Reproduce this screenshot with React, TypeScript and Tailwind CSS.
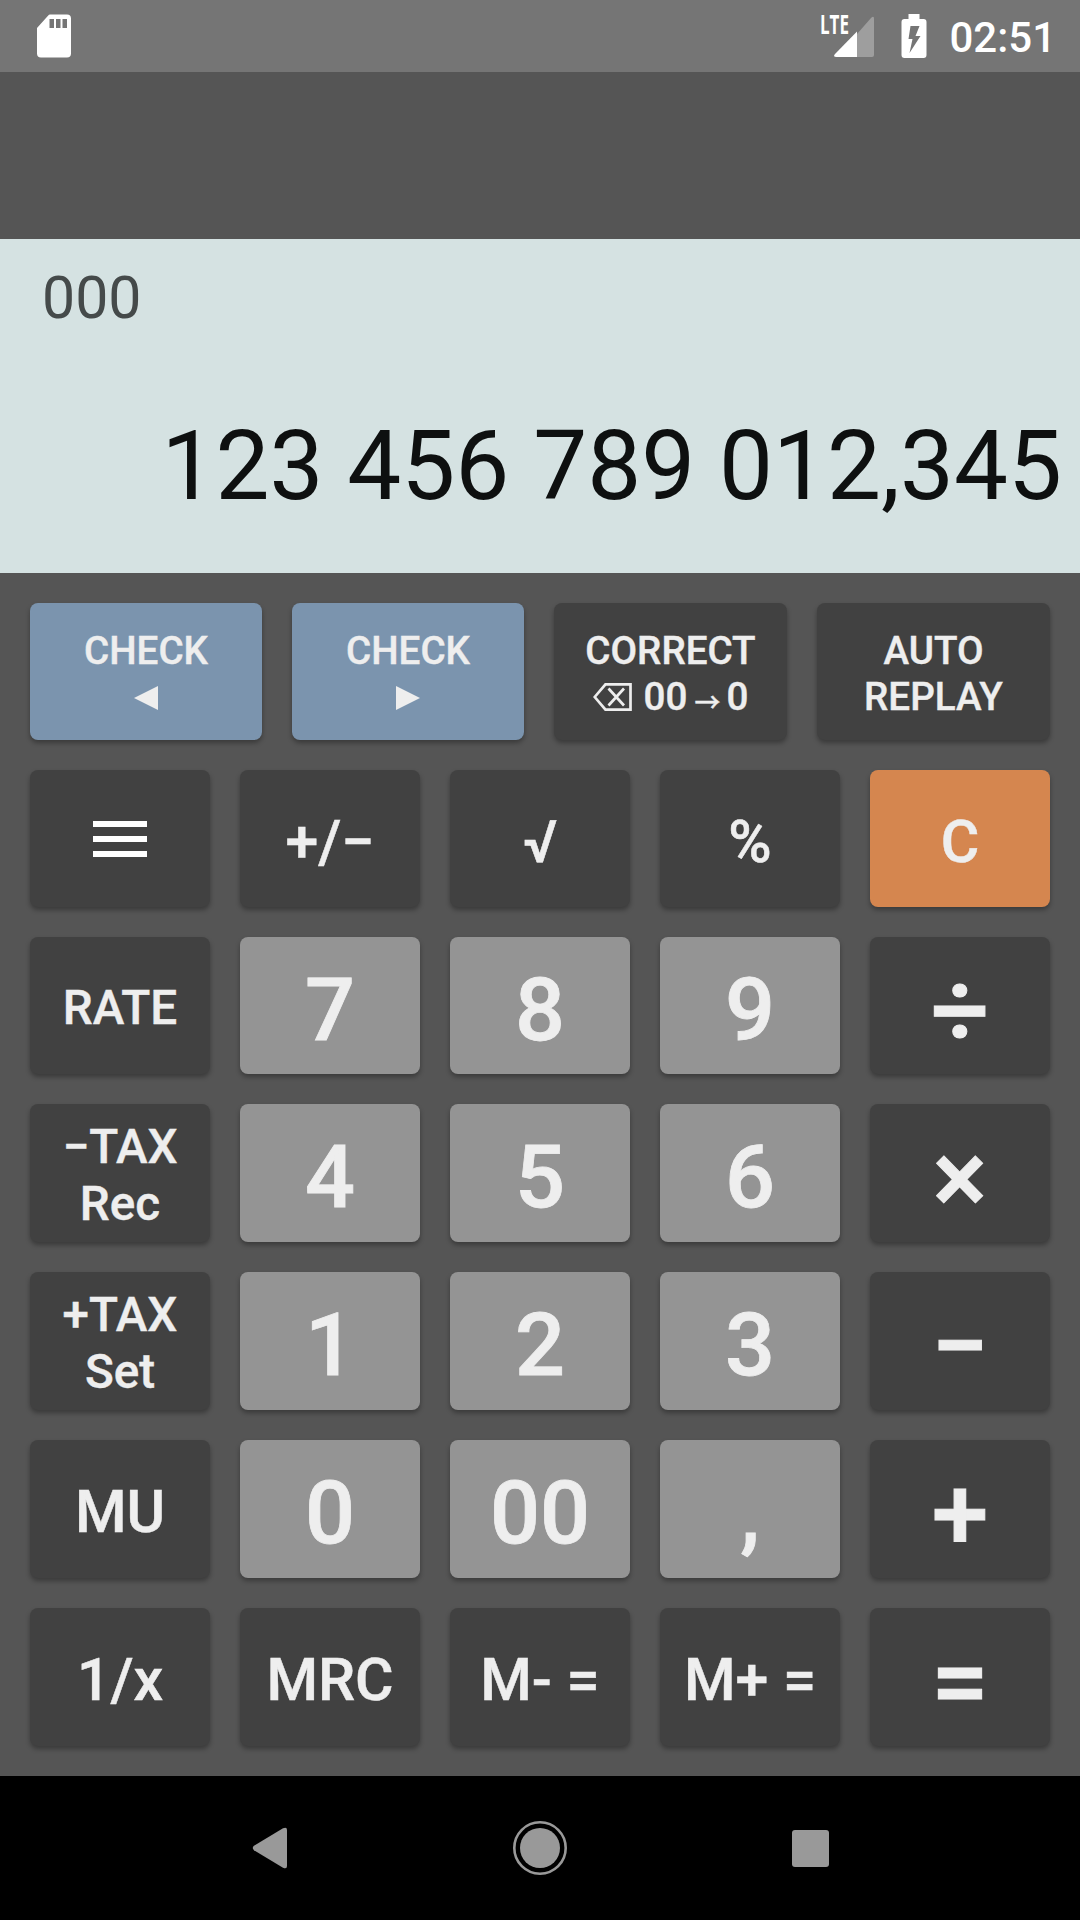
import type { ReactNode } from 'react';

type Tone = 'dark' | 'light' | 'blue' | 'orange';

const tones: Record<Tone, string> = {
  dark: 'bg-[#414141]',
  light: 'bg-[#949494]',
  blue: 'bg-[#7b94ae]',
  orange: 'bg-[#d5864f]',
};

const sizes = {
  icon: 'pt-px',
  xs: 'pt-[5px] text-[38.6px] leading-[46px] [-webkit-text-stroke:0.4px]',
  sm: 'pt-[5px] text-[47.6px] leading-[57px] [-webkit-text-stroke:0.4px]',
  md: 'pt-[6px] text-[59px] leading-[70px] [-webkit-text-stroke:0.5px]',
  lg: 'pt-[8px] text-[88px] leading-[106px] [-webkit-text-stroke:0.8px]',
  op: 'pt-[9px] text-[102px] leading-[118px] font-bold [-webkit-text-stroke:1px]',
};

function Key({
  children,
  tone = 'dark',
  size = 'md',
}: {
  children: ReactNode;
  tone?: Tone;
  size?: keyof typeof sizes;
}) {
  return (
    <button
      className={`flex min-w-0 flex-col items-center justify-center whitespace-pre rounded-[8px] font-medium text-[#eeeeee] shadow-[0_3px_5px_rgba(0,0,0,0.32)] ${tones[tone]} ${sizes[size]}`}
    >
      {children}
    </button>
  );
}

function StatusBar() {
  return (
    <header className="flex h-[72px] shrink-0 items-center bg-[#757575] text-white">
      {/* SD card */}
      <svg className="ml-[36px]" width="36" height="44" viewBox="0 0 36 44">
        <path
          fill="currentColor"
          fillRule="evenodd"
          d="M14 .5h17a4 4 0 0 1 4 4v35a4 4 0 0 1-4 4H5a4 4 0 0 1-4-4V14L12 1.700Q13 .5 14 .5ZM13.500 5v9h4.500V5Zm6.500 0v9h4.500V5Zm6.500 0v9h4.500V5Z"
        />
      </svg>

      <div className="ml-auto flex items-center pr-[24px]">
        {/* Signal */}
        <svg className="overflow-visible" width="60" height="60" viewBox="0 -8 60 60">
          <path d="M57 4.500V41a2 2 0 0 1-2 2H40V20L54 4Q57 1.500 57 4.500Z" fill="#9e9e9e" />
          <path d="M40 17.500V43H19.500Q15.500 43 18 40Z" fill="currentColor" />
          <text
            x="3"
            y="20"
            fill="currentColor"
            fontFamily="'Open Sans', sans-serif"
            fontSize="26.500"
            fontWeight="700"
            textLength="29"
            lengthAdjust="spacingAndGlyphs"
          >
            LTE
          </text>
        </svg>
        {/* Battery, charging */}
        <svg className="ml-[24px]" width="26" height="44" viewBox="0 0 26 44">
          <path
            fill="currentColor"
            fillRule="evenodd"
            d="M7.500 0h11v5h4a3 3 0 0 1 3 3v33a3 3 0 0 1-3 3h-19a3 3 0 0 1-3-3V8a3 3 0 0 1 3-3h4ZM9.500 12 7.500 25h4L8.500 39 19.500 22h-5l4-10Z"
          />
        </svg>
        <span className="ml-[22px] pt-[4px] text-[42px] font-medium leading-none">02:51</span>
      </div>
    </header>
  );
}

function NavBar() {
  return (
    <nav className="flex h-[144px] shrink-0 items-center justify-center bg-black text-[#999999]">
      <div className="flex w-[270px] justify-center">
        <svg width="36" height="44" viewBox="0 0 36 44">
          <path d="M2 19.800 31 2.300Q35 .5 35 4v36q0 3.500-4 1.700L2 24.200Q-.5 22 2 19.800Z" fill="currentColor" />
        </svg>
      </div>
      <div className="flex w-[270px] justify-center">
        <svg width="56" height="56" viewBox="0 0 56 56">
          <circle cx="28" cy="28" r="25.700" fill="none" stroke="currentColor" strokeWidth="2.600" />
          <circle cx="28" cy="28" r="20" fill="currentColor" />
        </svg>
      </div>
      <div className="flex w-[270px] justify-center">
        <div className="h-[37px] w-[37px] rounded-[3px] bg-[#999999]" />
      </div>
    </nav>
  );
}

export default function App() {
  return (
    <div className="flex h-[1920px] w-[1080px] flex-col bg-[#555555] font-['Roboto',sans-serif]">
      <StatusBar />

      <div className="h-[167px] shrink-0" />

      {/* Display */}
      <section className="flex h-[334px] shrink-0 flex-col bg-[#d5e2e2]">
        <p className="pl-[42px] pt-[24px] text-[59px] leading-[70px] text-[#454a4a]">000</p>
        <p className="mt-[77px] pr-[18px] text-right text-[96.1px] leading-[113px] text-[#0e1010]">
          123 456 789 012,345
        </p>
      </section>

      {/* Keypad */}
      <main className="flex flex-1 flex-col gap-[30px] p-[30px]">
        <div className="grid h-[137px] grid-cols-[232px_232px_233px_233px] gap-[30px]">
          <Key tone="blue" size="xs">
            <span>CHECK</span>
            <svg className="mb-[10px] mt-[12px]" width="24" height="24" viewBox="0 0 24 24">
              <path d="M0 12 24 0v24Z" fill="currentColor" />
            </svg>
          </Key>
          <Key tone="blue" size="xs">
            <span>CHECK</span>
            <svg className="mb-[10px] mt-[12px]" width="24" height="24" viewBox="0 0 24 24">
              <path d="M24 12 0 0v24Z" fill="currentColor" />
            </svg>
          </Key>
          <Key size="xs">
            <span>CORRECT</span>
            <span className="flex items-center">
              <svg className="mr-[12px]" width="39" height="28" viewBox="0 0 39 28" fill="none" stroke="currentColor" strokeWidth="2.700">
                <path d="M1.700 14 12.500 1.300h25v25.400h-25Z" />
                <path d="m15.500 5.500 15.500 17m0-17-15.500 17" />
              </svg>
              00
              <span className="ml-[7px] mr-[6px] pt-[8px] font-['Noto_Sans_CJK_JP',sans-serif] text-[26px] leading-[38px]">→</span>0
            </span>
          </Key>
          <Key size="xs">
            <span>AUTO</span>
            <span>REPLAY</span>
          </Key>
        </div>

        <div className="grid flex-1 grid-cols-5 grid-rows-[137px_137px_138px_138px_138px_138px] gap-[30px]">
          <Key size="icon">
            <svg width="54" height="36" viewBox="0 0 54 36" fill="#ffffff">
              <path d="M0 0h54v6H0zM0 15h54v6H0zM0 30h54v6H0z" />
            </svg>
          </Key>
          <Key>+/−</Key>
          <Key>√</Key>
          <Key>%</Key>
          <Key tone="orange">C</Key>

          <Key size="sm">RATE</Key>
          <Key tone="light" size="lg">7</Key>
          <Key tone="light" size="lg">8</Key>
          <Key tone="light" size="lg">9</Key>
          <Key size="op">÷</Key>

          <Key size="sm">
            <span>−TAX</span>
            <span>Rec</span>
          </Key>
          <Key tone="light" size="lg">4</Key>
          <Key tone="light" size="lg">5</Key>
          <Key tone="light" size="lg">6</Key>
          <Key size="op">×</Key>

          <Key size="sm">
            <span>+TAX</span>
            <span>Set</span>
          </Key>
          <Key tone="light" size="lg">1</Key>
          <Key tone="light" size="lg">2</Key>
          <Key tone="light" size="lg">3</Key>
          <Key size="op">−</Key>

          <Key>MU</Key>
          <Key tone="light" size="lg">0</Key>
          <Key tone="light" size="lg">00</Key>
          <Key tone="light" size="lg">,</Key>
          <Key size="op">+</Key>

          <Key>1/x</Key>
          <Key>MRC</Key>
          <Key>M- =</Key>
          <Key>M+ =</Key>
          <Key size="op">=</Key>
        </div>
      </main>

      <NavBar />
    </div>
  );
}
